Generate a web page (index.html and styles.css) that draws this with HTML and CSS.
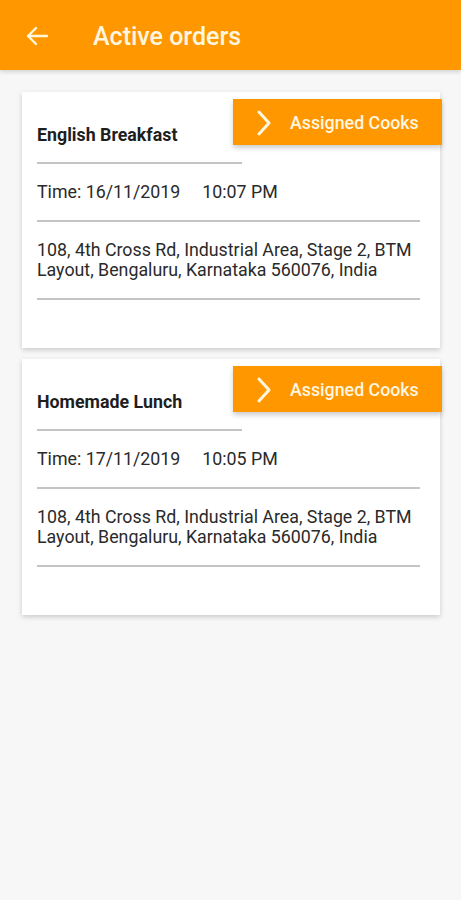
FILE: index.html
```html
<!DOCTYPE html>
<html lang="en">
<head>
<meta charset="utf-8">
<meta name="viewport" content="width=device-width, initial-scale=1.0">
<title>Active orders</title>
<link rel="stylesheet" href="styles.css">
</head>
<body>

<div class="toolbar">
    <svg class="back" width="22" height="20" viewBox="0 0 22 20">
        <path d="M21 10H2M10 2L2 10L10 18" fill="none" stroke="#fff6e0" stroke-width="2.4" stroke-linecap="round" stroke-linejoin="round"/>
    </svg>
    <span class="toolbar-title">Active orders</span>
</div>

<div class="list">
    <div class="card">
        <div class="card-top">
            <div class="dish">English Breakfast</div>
            <div class="cooks-btn">
                <svg width="16" height="26" viewBox="0 0 16 26">
                    <path d="M3 2L13 13L3 24" fill="none" stroke="#fff6e0" stroke-width="3" stroke-linecap="round" stroke-linejoin="round"/>
                </svg>
                <span>Assigned Cooks</span>
            </div>
        </div>
        <div class="line short"></div>
        <p class="row">Time: 16/11/2019<span class="hour">10:07 PM</span></p>
        <div class="line"></div>
        <p class="row">108, 4th Cross Rd, Industrial Area, Stage 2, BTM Layout, Bengaluru, Karnataka 560076, India</p>
        <div class="line"></div>
    </div>

    <div class="card">
        <div class="card-top">
            <div class="dish">Homemade Lunch</div>
            <div class="cooks-btn">
                <svg width="16" height="26" viewBox="0 0 16 26">
                    <path d="M3 2L13 13L3 24" fill="none" stroke="#fff6e0" stroke-width="3" stroke-linecap="round" stroke-linejoin="round"/>
                </svg>
                <span>Assigned Cooks</span>
            </div>
        </div>
        <div class="line short"></div>
        <p class="row">Time: 17/11/2019<span class="hour">10:05 PM</span></p>
        <div class="line"></div>
        <p class="row">108, 4th Cross Rd, Industrial Area, Stage 2, BTM Layout, Bengaluru, Karnataka 560076, India</p>
        <div class="line"></div>
    </div>
</div>

</body>
</html>
```

FILE: styles.css
```css
* {
    box-sizing: border-box;
}
body {
    margin: 0;
    background-color: #f7f7f7;
    font-family: Roboto, "Noto Sans", sans-serif;
    color: #222;
}
.toolbar {
    height: 70px;
    background-color: #ff9800;
    display: flex;
    align-items: center;
    padding-left: 26px;
    box-shadow: 0 2px 4px rgba(0,0,0,0.15);
}
.back {
    margin-top: 2px;
}
.toolbar-title {
    margin-left: 45px;
    margin-top: 3px;
    font-size: 25px;
    font-weight: 500;
    color: #fff6e0;
}
.list {
    padding: 22px 21px 0 22px;
}
.card {
    background-color: white;
    padding: 7px 0 48px 0;
    margin-bottom: 11px;
    box-shadow: 0 2px 5px rgba(0,0,0,0.18);
}
.card-top {
    display: flex;
    justify-content: space-between;
    align-items: flex-start;
}
.dish {
    margin: 26px 0 0 15px;
    font-size: 17.8px;
    line-height: 20px;
    font-weight: 700;
    color: #1e1e1e;
}
.cooks-btn {
    width: 209px;
    height: 46px;
    margin-right: -2px;
    background-color: #ff9800;
    display: flex;
    align-items: center;
    padding-left: 23px;
    box-shadow: 0 3px 5px rgba(0,0,0,0.2);
    color: #fff6e0;
    font-size: 17.8px;
    font-weight: 500;
}
.cooks-btn svg {
    margin-top: 1px;
}
.cooks-btn span {
    margin-left: 18px;
}
.line {
    height: 2px;
    margin: 0 20px 0 15px;
    background-color: #c4c4c4;
}
.line.short {
    width: 205px;
    margin-top: 17px;
}
.row {
    margin: 18px 20px 18px 15px;
    font-size: 17.8px;
    line-height: 20px;
    color: #2a2a2a;
}
.hour {
    margin-left: 22px;
}
```
